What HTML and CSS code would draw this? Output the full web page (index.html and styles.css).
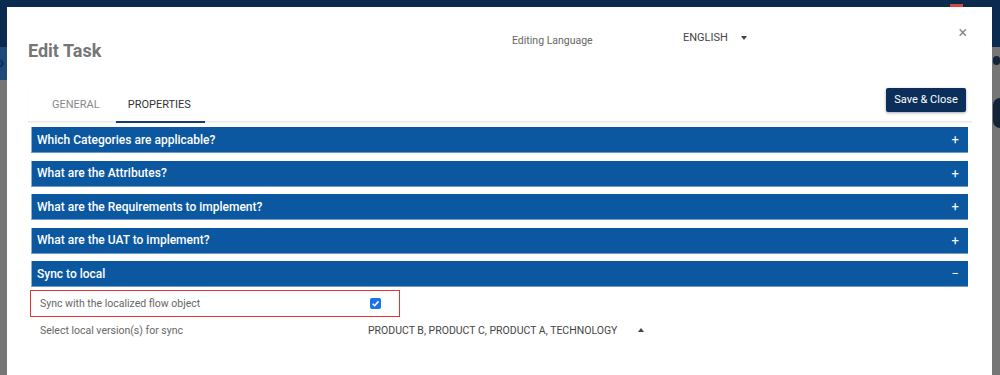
FILE: index.html
```html
<!DOCTYPE html>
<html lang="en">
	<head>
		<meta charset="utf-8" />
		<title>Edit Task</title>
		<link rel="stylesheet" href="styles.css">
	</head>
	<body>
		<div class="backdrop">
			<div class="topbar"><span class="badge"></span></div>
			<div class="side-left"><span class="chev">&#8250;</span></div>
			<div class="side-right"><span class="dot1"></span><span class="dot2"></span></div>
		</div>
		<div class="modal">
			<div class="modal-head">
				<h1 class="title">Edit Task</h1>
				<div class="lang-label">Editing Language</div>
				<div class="lang-select">ENGLISH <span class="caret-down"></span></div>
				<div class="close">&times;</div>
			</div>
			<div class="tabs-row">
				<div class="tabs">
					<div class="tab">GENERAL</div>
					<div class="tab active">PROPERTIES</div>
				</div>
				<div class="btn-save">Save &amp; Close</div>
			</div>
			<div class="panels">
				<div class="panel-head"><span>Which Categories are applicable?</span><span class="sign">+</span></div>
				<div class="panel-head"><span>What are the Attributes?</span><span class="sign">+</span></div>
				<div class="panel-head"><span>What are the Requirements to implement?</span><span class="sign">+</span></div>
				<div class="panel-head"><span>What are the UAT to implement?</span><span class="sign">+</span></div>
				<div class="panel-head"><span>Sync to local</span><span class="sign minus">&minus;</span></div>
				<div class="panel-body">
					<div class="sync-row">
						<span class="label">Sync with the localized flow object</span>
						<span class="check">
							<svg width="11" height="11" viewBox="0 0 11 11"><rect width="11" height="11" rx="2" fill="#1a73e8"/><path d="M2.6 5.7 L4.6 7.7 L8.5 3.4" stroke="#fff" stroke-width="1.6" fill="none"/></svg>
						</span>
					</div>
					<div class="version-row">
						<span class="label">Select local version(s) for sync</span>
						<span class="versions">PRODUCT B, PRODUCT C, PRODUCT A, TECHNOLOGY</span>
						<span class="caret-up"></span>
					</div>
				</div>
			</div>
		</div>
	</body>
</html>
```
FILE: styles.css
```css
body, html {
	margin:0;
	padding:0;
	font-family:Roboto, "Liberation Sans", sans-serif;
	overflow:hidden;
}
.backdrop {
	width:1000px;
	height:375px;
	background-color:#767676;
	position:relative;
}
.topbar {
	height:47px;
	background-color:#0b2a4f;
	position:relative;
}
.badge {
	position:absolute;
	left:950px;
	top:4px;
	width:13px;
	height:4px;
	background-color:#d9443f;
}
.side-left {
	position:absolute;
	left:0;
	top:47px;
	width:7px;
	height:33px;
	background-color:#1e4a78;
}
.chev {
	position:absolute;
	left:-1px;
	top:4px;
	color:#0b2a4f;
	font-size:18px;
	font-weight:bold;
}
.side-right .dot1 {
	position:absolute;
	left:993px;
	top:56px;
	width:7px;
	height:9px;
	border-radius:4px;
	background-color:#12233a;
}
.side-right .dot2 {
	position:absolute;
	left:993px;
	top:98px;
	width:14px;
	height:30px;
	border-radius:14px;
	background-color:#12233a;
}
.modal {
	position:absolute;
	left:7px;
	top:7px;
	width:985px;
	height:380px;
	background-color:white;
	box-sizing:border-box;
	padding-left:21px;
	padding-right:20px;
}
.modal-head {
	display:flex;
	align-items:flex-start;
	height:78px;
}
.title {
	margin:0;
	margin-top:33px;
	width:484px;
	font-size:18px;
	font-weight:bold;
	color:#767676;
}
.lang-label {
	margin-top:27px;
	width:171px;
	font-size:10.5px;
	color:#666;
}
.lang-select {
	margin-top:24px;
	font-size:11px;
	color:#444;
	display:flex;
	align-items:center;
}
.caret-down {
	margin-left:13px;
	width:0;
	height:0;
	border-left:3.5px solid transparent;
	border-right:3.5px solid transparent;
	border-top:4px solid #444;
}
.close {
	margin-left:auto;
	margin-top:16px;
	margin-right:5px;
	font-size:16px;
	color:#888;
}
.tabs-row {
	display:flex;
	align-items:flex-start;
	height:39px;
}
.tabs {
	display:flex;
	width:944px;
	height:36px;
	border-bottom:1px solid #e8e8e8;
	box-shadow:0 1px 1px #f3f3f3;
}
.tab {
	margin-left:12px;
	padding:13px 12px 0 12px;
	height:23px;
	font-size:11px;
	color:#888;
	border-bottom:2px solid transparent;
}
.tab.active {
	margin-left:4px;
	padding-right:14px;
	color:#333;
	border-bottom-color:#1b3c69;
}
.btn-save {
	margin-left:-86px;
	margin-top:3px;
	width:80px;
	height:24px;
	line-height:24px;
	text-align:center;
	font-size:11px;
	color:white;
	background-color:#0b2f5a;
	border-radius:2px;
	box-shadow:0 1px 3px rgba(0,0,0,0.35);
}
.panels {
	padding-left:3px;
	width:937px;
	margin-top:3px;
}
.panel-head {
	display:flex;
	justify-content:space-between;
	align-items:center;
	height:25px;
	padding:0 9px 0 5px;
	margin-bottom:7.5px;
	background-color:#0b57a0;
	border-bottom:1px solid #6f9bcc;
	border-left:1px solid #8fb0d6;
	color:white;
	font-size:12px;
	font-weight:500;
}
.sign {
	font-size:13px;
	font-weight:normal;
}
.panel-body {
	margin-top:-4.5px;
}
.sync-row {
	display:flex;
	align-items:center;
	width:368px;
	height:25px;
	border:1px solid #e5332f;
	margin-left:-1px;
}
.label {
	font-size:10.5px;
	color:#666;
	padding-left:9px;
	width:330px;
}
.check {
	display:flex;
}
.version-row {
	display:flex;
	align-items:center;
	margin-top:5px;
	height:16px;
}
.version-row .label {
	width:328px;
	padding-left:9px;
}
.versions {
	font-size:10.5px;
	color:#444;
	width:270px;
}
.caret-up {
	width:0;
	height:0;
	border-left:3.5px solid transparent;
	border-right:3.5px solid transparent;
	border-bottom:4px solid #444;
}
```
